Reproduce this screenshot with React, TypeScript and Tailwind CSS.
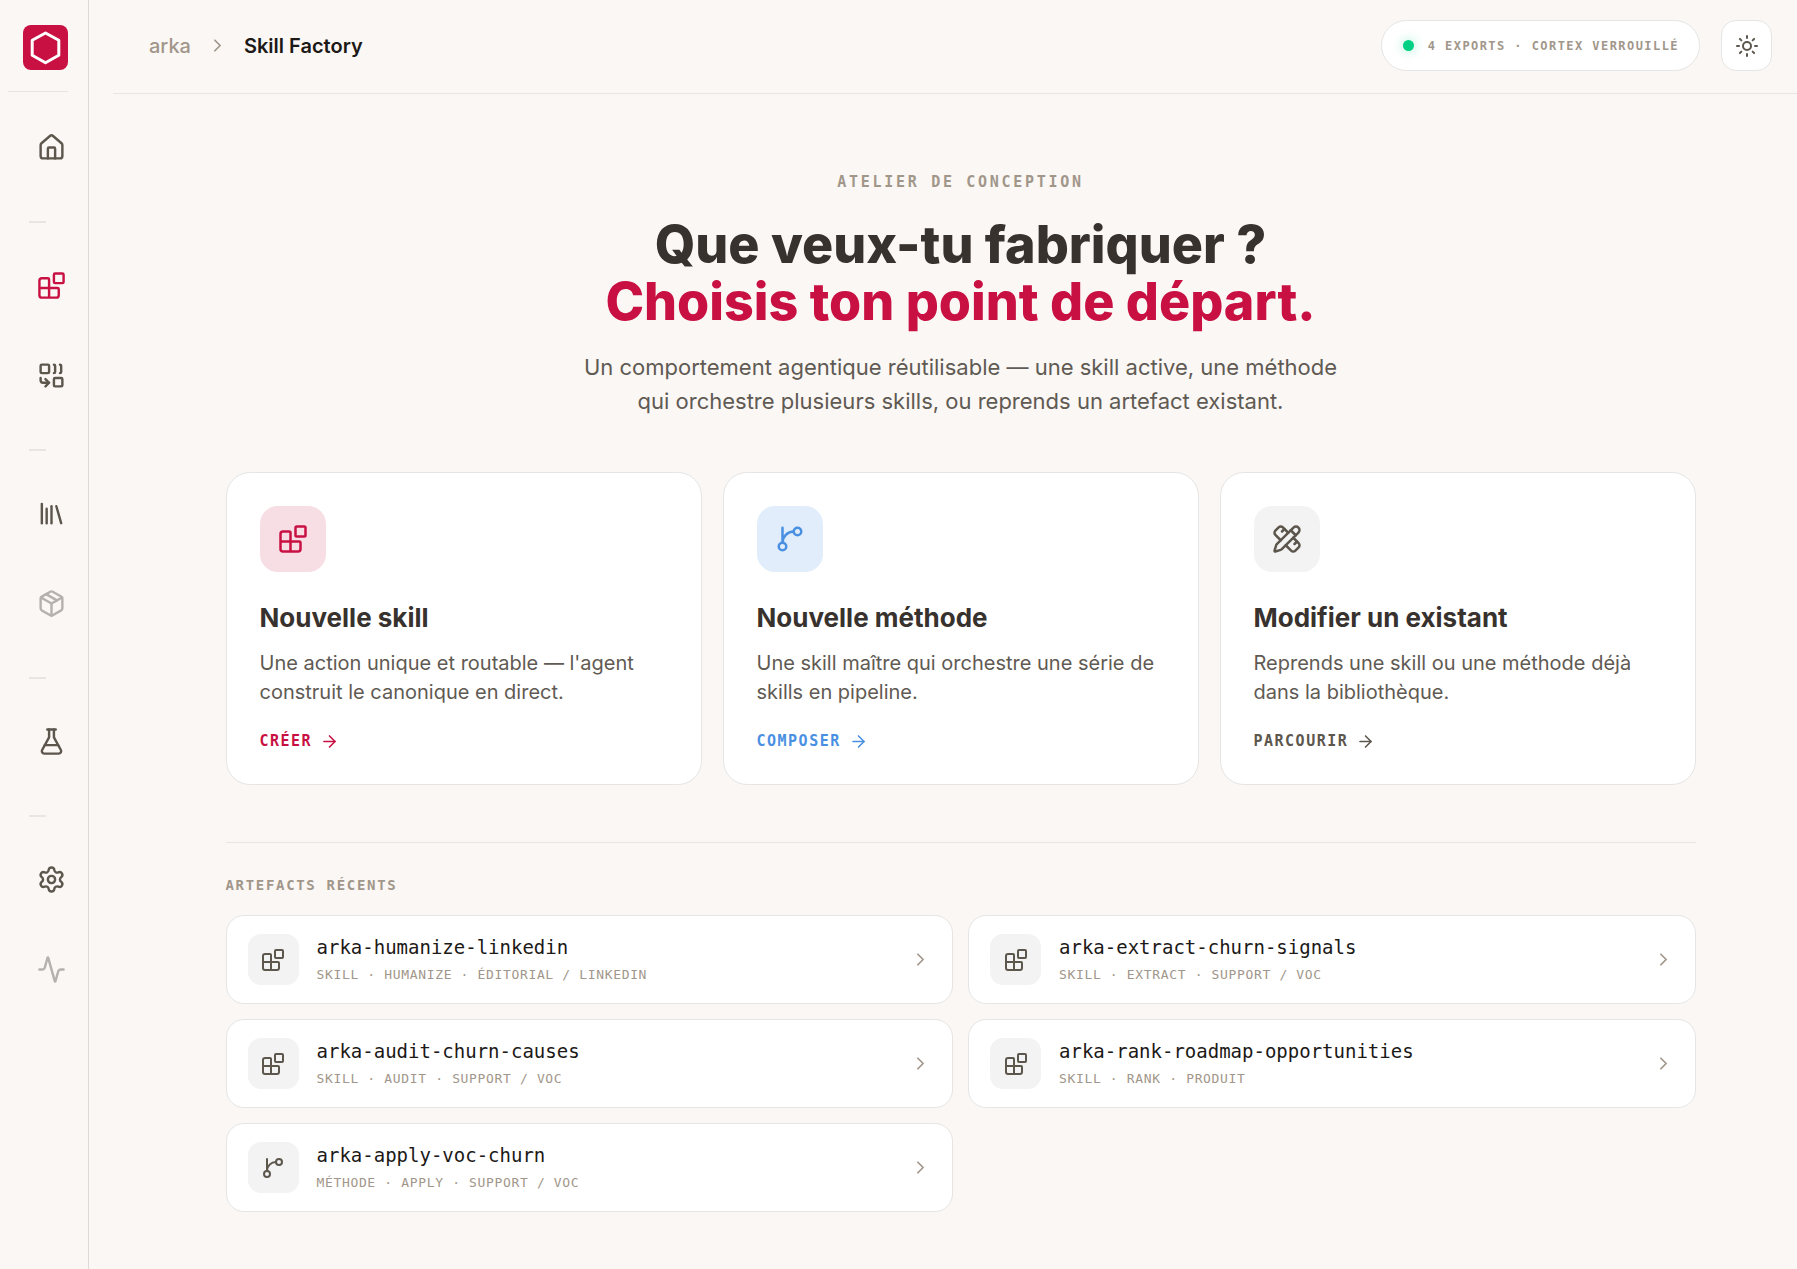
import {
    Activity,
    ArrowRight,
    Blocks,
    ChevronRight,
    Combine,
    FlaskConical,
    House,
    Library,
    Package,
    PencilRuler,
    Settings,
    Sun,
} from 'lucide-react';
import type { ComponentType } from 'react';

type IconProps = { size?: number; strokeWidth?: number };
type NavItem = { label: string; icon: ComponentType<IconProps>; active?: boolean; muted?: boolean };

const BranchIcon = ({ size = 24, strokeWidth = 2 }: IconProps) => (
    <svg
        width={size}
        height={size}
        viewBox="0 0 24 24"
        fill="none"
        stroke="currentColor"
        strokeWidth={strokeWidth}
        strokeLinecap="round"
        strokeLinejoin="round"
        aria-hidden="true"
    >
        <path d="M15 6a9 9 0 0 0-9 9V3" />
        <circle cx="18" cy="6" r="3" />
        <circle cx="6" cy="18" r="3" />
    </svg>
);

const NAV_GROUPS: NavItem[][] = [
    [{ label: 'Accueil', icon: House }],
    [
        { label: 'Skill Factory', icon: Blocks, active: true },
        { label: 'Pipelines', icon: Combine },
    ],
    [
        { label: 'Bibliothèque', icon: Library },
        { label: 'Packages', icon: Package, muted: true },
    ],
    [{ label: 'Laboratoire', icon: FlaskConical }],
    [
        { label: 'Paramètres', icon: Settings },
        { label: 'Activité', icon: Activity, muted: true },
    ],
];

const STARTING_POINTS = [
    {
        title: 'Nouvelle skill',
        description: "Une action unique et routable — l'agent construit le canonique en direct.",
        cta: 'Créer',
        icon: Blocks,
        tile: 'bg-[#f7dde4] text-[#c81043]',
        link: 'text-[#c81043]',
    },
    {
        title: 'Nouvelle méthode',
        description: 'Une skill maître qui orchestre une série de skills en pipeline.',
        cta: 'Composer',
        icon: BranchIcon,
        tile: 'bg-[#e1edfa] text-[#4a90e2]',
        link: 'text-[#4a90e2]',
    },
    {
        title: 'Modifier un existant',
        description: 'Reprends une skill ou une méthode déjà dans la bibliothèque.',
        cta: 'Parcourir',
        icon: PencilRuler,
        tile: 'bg-[#f3f3f3] text-[#5c564d]',
        link: 'text-[#5c564d]',
    },
];

const RECENT_ARTEFACTS = [
    { name: 'arka-humanize-linkedin', meta: 'Skill · Humanize · Éditorial / LinkedIn', icon: Blocks },
    { name: 'arka-extract-churn-signals', meta: 'Skill · Extract · Support / VOC', icon: Blocks },
    { name: 'arka-audit-churn-causes', meta: 'Skill · Audit · Support / VOC', icon: Blocks },
    { name: 'arka-rank-roadmap-opportunities', meta: 'Skill · Rank · Produit', icon: Blocks },
    { name: 'arka-apply-voc-churn', meta: 'Méthode · Apply · Support / VOC', icon: BranchIcon },
];

const Logo = () => (
    <svg width="45" height="45" viewBox="0 0 45 45" fill="none" aria-hidden="true">
        <rect width="45" height="45" rx="8" fill="#c81043" />
        <path d="M22.5 8 35.8 15.3V30.2L22.5 37.7 9.2 30.2V15.3Z" stroke="#fff" strokeWidth="3" strokeLinejoin="round" />
    </svg>
);

const NavButton = ({ item }: { item: NavItem }) => {
    const Icon = item.icon;
    const tone = item.active ? 'text-[#c81043]' : item.muted ? 'text-[#b5b1ad]' : 'text-[#5c564d]';

    return (
        <button aria-label={item.label} className={`flex h-[66px] w-full items-center pl-[37px] ${tone}`}>
            <Icon size={29} strokeWidth={2} />
        </button>
    );
};

const Sidebar = () => (
    <aside className="w-[89px] shrink-0 border-r border-[#dddad7]">
        <a href="#" aria-label="arka" className="mt-[25px] ml-[23px] block w-[45px]">
            <Logo />
        </a>
        <div className="mt-[21px] mr-5 ml-2 h-px bg-[#e8e5e2]" />
        <nav className="mt-[22px] flex flex-col gap-6">
            {NAV_GROUPS.map((group, index) => (
                <div key={index} className="flex flex-col gap-6">
                    {index > 0 && (
                        <div className="pt-[17px] pb-[5px] pl-[29px]">
                            <div className="h-0.5 w-[17px] bg-[#e8e6e2]" />
                        </div>
                    )}
                    {group.map((item) => (
                        <NavButton key={item.label} item={item} />
                    ))}
                </div>
            ))}
        </nav>
    </aside>
);

const Header = () => (
    <header className="flex items-center justify-between border-b border-[#e8e5e2] pt-5 pr-[25px] pb-[22px] pl-9">
        <nav aria-label="Fil d'Ariane" className="flex items-center gap-4 text-[20px] leading-7">
            <a href="#" className="font-medium text-[#a1968a]">arka</a>
            <ChevronRight size={21} strokeWidth={2} className="text-[#a1968a]" />
            <span className="font-semibold text-[#1c1917]">Skill Factory</span>
        </nav>
        <div className="flex items-center gap-[21px]">
            <div className="flex h-[51px] items-center gap-[14px] rounded-full border border-[#e5e5e5] bg-white pr-5 pl-[21px]">
                <span className="size-[11px] rounded-full bg-[#00d084] shadow-[0_0_12px_rgba(0,208,132,0.4)]" />
                <span className="font-['DejaVu_Sans_Mono',monospace] text-[12px] leading-5 font-bold tracking-[0.12em] text-[#a1968a] uppercase">
                    4 exports · Cortex verrouillé
                </span>
            </div>
            <button
                aria-label="Changer de thème"
                className="flex size-[51px] items-center justify-center rounded-[15px] border border-[#e5e5e5] bg-white text-[#5c564d]"
            >
                <Sun size={24} strokeWidth={2} />
            </button>
        </div>
    </header>
);

export default function App() {
    return (
        <div className="flex min-h-screen bg-[#fbf7f4] font-['Inter',sans-serif]">
            <Sidebar />
            <div className="ml-6 min-w-0 flex-1">
                <Header />
                <main className="pr-[25px] pb-14 pl-9">
                    <div className="mx-auto max-w-[1470px]">
                        <section className="pt-[78px] text-center">
                            <p className="font-['DejaVu_Sans_Mono',monospace] text-[15px] leading-5 font-bold tracking-[0.18em] text-[#a1968a] uppercase">
                                Atelier de conception
                            </p>
                            <h1 className="mt-6 text-[52px] leading-[57px] font-extrabold text-[#38322e]">
                                Que veux-tu fabriquer ?
                                <span className="block text-[#c81043]">Choisis ton point de départ.</span>
                            </h1>
                            <p className="mx-auto mt-5 max-w-[780px] text-[22px] leading-[34px] text-[#5f5a53]">
                                Un comportement agentique réutilisable — une skill active, une méthode qui orchestre plusieurs
                                skills, ou reprends un artefact existant.
                            </p>
                        </section>

                        <section className="mt-[54px] grid grid-cols-3 gap-[21px]">
                            {STARTING_POINTS.map(({ title, description, cta, icon: Icon, tile, link }) => (
                                <a key={title} href="#" className="block rounded-3xl border border-[#e5e5e5] bg-white p-[33px]">
                                    <div className={`flex size-[66px] items-center justify-center rounded-[18px] ${tile}`}>
                                        <Icon size={30} strokeWidth={2} />
                                    </div>
                                    <h2 className="mt-[29px] text-[26px] leading-[34px] font-bold text-[#38322e]">{title}</h2>
                                    <p className="mt-[14px] text-[20px] leading-[29px] text-[#5f5a53]">{description}</p>
                                    <div className={`mt-6 flex items-center gap-2 ${link}`}>
                                        <span className="font-['DejaVu_Sans_Mono',monospace] text-[15px] leading-5 font-bold tracking-[0.1em] uppercase">
                                            {cta}
                                        </span>
                                        <ArrowRight size={19} />
                                    </div>
                                </a>
                            ))}
                        </section>

                        <section className="mt-[57px] border-t border-[#e8e5e2] pt-8">
                            <h2 className="font-['DejaVu_Sans_Mono',monospace] text-[14px] leading-5 font-bold tracking-[0.12em] text-[#a1968a] uppercase">
                                Artefacts récents
                            </h2>
                            <ul className="mt-5 grid grid-cols-2 gap-[15px]">
                                {RECENT_ARTEFACTS.map(({ name, meta, icon: Icon }) => (
                                    <li key={name}>
                                        <a
                                            href="#"
                                            className="flex items-center gap-[18px] rounded-[18px] border border-[#e5e5e5] bg-white px-[21px] py-[18px]"
                                        >
                                            <span className="flex size-[51px] shrink-0 items-center justify-center rounded-[13px] bg-[#f3f3f3] text-[#5c564d]">
                                                <Icon size={24} strokeWidth={2} />
                                            </span>
                                            <span className="min-w-0 flex-1 font-['DejaVu_Sans_Mono',monospace]">
                                                <span className="block text-[19px] leading-[26px] text-[#1c1917]">{name}</span>
                                                <span className="mt-1 block text-[13px] leading-[21px] tracking-[0.05em] text-[#a1968a] uppercase">
                                                    {meta}
                                                </span>
                                            </span>
                                            <ChevronRight size={21} strokeWidth={2} className="text-[#a1968a]" />
                                        </a>
                                    </li>
                                ))}
                            </ul>
                        </section>
                    </div>
                </main>
            </div>
        </div>
    );
}
